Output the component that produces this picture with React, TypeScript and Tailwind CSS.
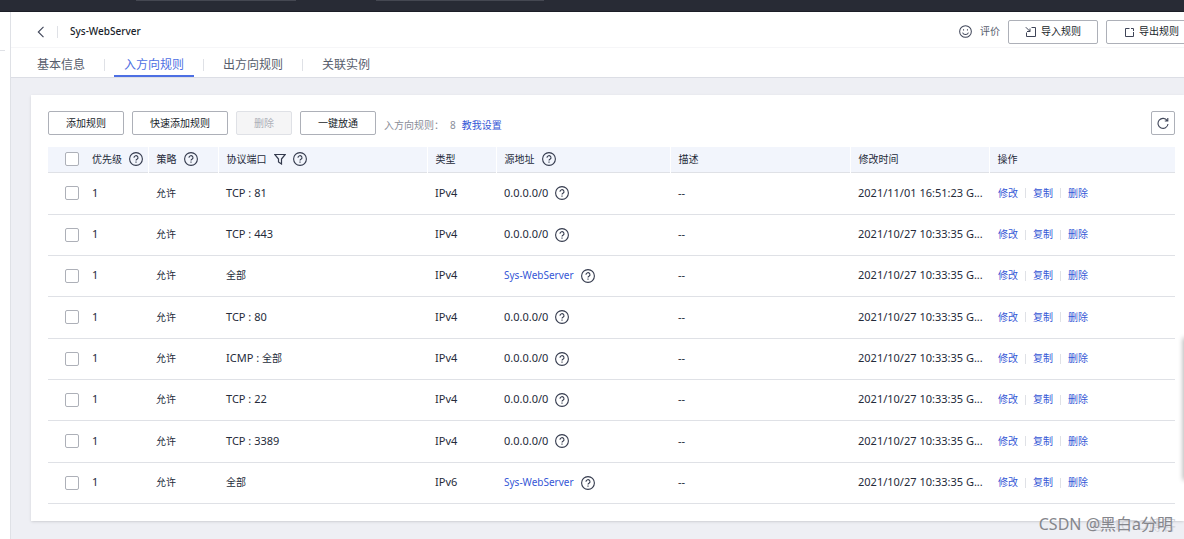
import React from "react";

const font = "font-['Noto_Sans','Noto_Sans_CJK_SC',sans-serif]";

function Help({ label = "帮助" }: { label?: string }) {
  return (
    <button type="button" aria-label={label} className="inline-flex shrink-0">
      <svg viewBox="0 0 14 14" className="size-[14px]" fill="none" stroke="#343a4d" strokeWidth="1.1">
        <circle cx="7" cy="7" r="6.4" />
        <path d="M5 5.700a2 1.900 0 1 1 3 1.500c-.7.4-1 .7-1 1.400M7 9.600v1.200" />
      </svg>
    </button>
  );
}

function Tick({ label }: { label: string }) {
  return (
    <input
      type="checkbox"
      aria-label={label}
      className="block size-[14px] appearance-none rounded-xs border border-[#adb0b8] bg-white"
    />
  );
}

type Rule = { proto?: string; all?: boolean; type: string; source?: string; time: string };

const old = "2021/10/27 10:33:35 G...";
const rules: Rule[] = [
  { proto: "TCP : 81", type: "IPv4", time: "2021/11/01 16:51:23 G..." },
  { proto: "TCP : 443", type: "IPv4", time: old },
  { all: true, type: "IPv4", source: "Sys-WebServer", time: old },
  { proto: "TCP : 80", type: "IPv4", time: old },
  { proto: "ICMP : ", all: true, type: "IPv4", time: old },
  { proto: "TCP : 22", type: "IPv4", time: old },
  { proto: "TCP : 3389", type: "IPv4", time: old },
  { all: true, type: "IPv6", source: "Sys-WebServer", time: old },
];

const tabs = ["基本信息", "入方向规则", "出方向规则", "关联实例"];
const heads = ["优先级", "策略", "协议端口", "类型", "源地址", "描述", "修改时间", "操作"];
const withHelp = ["优先级", "策略", "协议端口", "源地址"];

function HeaderButton({ children, icon }: { children: string; icon: React.ReactNode }) {
  return (
    <button
      type="button"
      className="flex h-6 w-[90px] shrink-0 items-center justify-center gap-1 rounded-xs border border-[#adb0b8] bg-white text-[10px] text-[#191e2b]"
    >
      {icon}
      {children}
    </button>
  );
}

function ToolButton({ children, disabled = false }: { children: string; disabled?: boolean }) {
  return (
    <button
      type="button"
      disabled={disabled}
      className="h-6 rounded-xs border border-[#adb0b8] bg-white px-[17px] text-[10px] text-[#191e2b] disabled:border-[#dfe1e6] disabled:bg-[#f5f5f6] disabled:text-[#adb0b8]"
    >
      {children}
    </button>
  );
}

export default function App() {
  return (
    <div className={`relative flex min-h-screen flex-col overflow-hidden bg-white text-[#252b3a] ${font}`}>
      <div className="h-3 border-b border-[#1c1e27] bg-[#282b35]">
        <div className="ml-[136px] flex gap-20">
          <div className="h-px w-40 bg-[#454852]" />
          <div className="h-px w-[168px] bg-[#454852]" />
        </div>
      </div>
      <div className="flex flex-1">
        <aside className="w-[11px] shrink-0 border-r border-[#dfe1e6] pt-[38px]">
          <div className="h-px w-[5px] bg-[#dfe1e6]" />
        </aside>
        <main className="flex min-w-0 flex-1 flex-col bg-[#eeeff4]">
          <header className="border-b border-[#dcdee5] bg-white">
            <div className="flex h-9 items-center overflow-hidden border-b border-[#f6f6f8] pl-6 pt-1">
              <button type="button" aria-label="返回" className="flex">
                <svg viewBox="0 0 12 12" className="size-3" fill="none" stroke="#3f4558" strokeWidth="1.1">
                  <path d="M8.500.800 3.300 6l5.200 5.200" />
                </svg>
              </button>
              <div className="ml-[10px] h-3 w-px bg-[#dfe1e6]" />
              <h1 className="ml-3 text-[10px] font-medium text-[#191e2b]">Sys-WebServer</h1>
              <button type="button" className="ml-auto flex items-center gap-2 text-[10px] text-[#575d6c]">
                <svg viewBox="0 0 14 14" className="size-[13px]" fill="none" stroke="#3f4558" strokeWidth="1.100">
                  <circle cx="7" cy="7" r="6.300" />
                  <path d="M3.800 8.200c.6 1.400 1.800 2.100 3.200 2.100s2.600-.7 3.200-2.100M4.900 4.500v1.400M9.100 4.500v1.400" />
                </svg>
                评价
              </button>
              <div className="ml-2 -mr-3 flex shrink-0 gap-2">
                <HeaderButton
                  icon={
                    <svg viewBox="0 0 12 12" className="size-3" fill="none" stroke="#3f4558" strokeWidth="1">
                      <path d="M6.500 1.500h4v9h-9V6.500M.8 1.200l4.200 4.200M5 2.500v3H2" />
                    </svg>
                  }
                >
                  导入规则
                </HeaderButton>
                <HeaderButton
                  icon={
                    <svg viewBox="0 0 12 12" className="size-3" fill="none" stroke="#3f4558" strokeWidth="1">
                      <path d="M6.500 2.500h-4v8h8V6M8 2.500h2.500V5" />
                    </svg>
                  }
                >
                  导出规则
                </HeaderButton>
              </div>
            </div>
            <nav className="flex h-[29px] items-stretch pl-4">
              {tabs.map((t, i) => (
                <React.Fragment key={t}>
                  {i > 0 && <div className="mx-[9px] mt-[11px] h-3 w-px shrink-0 bg-[#dfe1e6]" />}
                  <a
                    href="#"
                    className={
                      i === 1
                        ? "flex items-center border-b-2 border-[#4d6fe3] px-[10px] pt-[6px] text-[12px] text-[#4d6fe3]"
                        : "flex items-center border-b-2 border-transparent px-[10px] pt-[6px] text-[12px] text-[#575d6c]"
                    }
                  >
                    {t}
                  </a>
                </React.Fragment>
              ))}
            </nav>
          </header>

          <section className="mb-[18px] ml-5 mt-[17px] flex-1 bg-white pb-4 pl-[17px] pr-[9px] pt-4 shadow-sm">
            <div className="flex items-center gap-2">
              <ToolButton>添加规则</ToolButton>
              <ToolButton>快速添加规则</ToolButton>
              <ToolButton disabled>删除</ToolButton>
              <ToolButton>一键放通</ToolButton>
              <p className="flex gap-[6px] pt-1 text-[10px] text-[#8a8e99]">
                <span>入方向规则：</span>
                <span>8</span>
                <a href="#" className="text-[#3557d6]">教我设置</a>
              </p>
              <button
                type="button"
                aria-label="刷新"
                className="ml-auto flex size-6 items-center justify-center rounded-xs border border-[#adb0b8]"
              >
                <svg viewBox="0 0 12 12" className="size-3" fill="none" stroke="#3f4558" strokeWidth="1.1">
                  <path d="M10.200 3.600A5 5 0 1 0 11 7M10.800 1v3H7.800" />
                </svg>
              </button>
            </div>

            <table className="mt-3 w-full table-fixed border-collapse text-left">
              <colgroup>
                <col className="w-9" />
                <col className="w-16" />
                <col className="w-[70px]" />
                <col className="w-[209px]" />
                <col className="w-[69px]" />
                <col className="w-[174px]" />
                <col className="w-[180px]" />
                <col className="w-[139px]" />
                <col />
              </colgroup>
              <thead>
                <tr className="h-[25px] border-b border-[#dfe1e6] bg-[#f2f5fc] text-[10px]">
                  <th className="p-0 pl-[17px]">
                    <Tick label="全选" />
                  </th>
                  {heads.map((h, i) => (
                    <th
                      key={h}
                      className={
                        i === 0
                          ? "p-0 pl-2 font-normal whitespace-nowrap"
                          : "border-l border-white p-0 pl-2 font-normal whitespace-nowrap"
                      }
                    >
                      <div className="flex items-center gap-[7px]">
                        {h}
                        {h === "协议端口" && (
                          <button type="button" aria-label="筛选" className="flex">
                            <svg viewBox="0 0 12 12" className="size-3" fill="none" stroke="#343a4d" strokeWidth="1.2">
                              <path d="M.8 1.500h10.400L7.500 6v5L4.500 9V6z" />
                            </svg>
                          </button>
                        )}
                        {withHelp.includes(h) && <Help />}
                      </div>
                    </th>
                  ))}
                </tr>
              </thead>
              <tbody>
                {rules.map((r, i) => (
                  <tr
                    key={i}
                    className="h-[41px] border-b border-[#dfe1e6] text-[11px] whitespace-nowrap nth-[3n+1]:h-[42px]"
                  >
                    <td className="p-0 pl-[17px]">
                      <Tick label={`选择规则 ${i + 1}`} />
                    </td>
                    <td className="p-0 pl-2">1</td>
                    <td className="p-0 pl-2 text-[10px]">允许</td>
                    <td className="p-0 pl-2 whitespace-pre">
                      {r.proto}
                      {r.all && <span className="text-[10px]">全部</span>}
                    </td>
                    <td className="p-0 pl-2">{r.type}</td>
                    <td className="p-0 pl-2">
                      <div className="flex items-center gap-[7px]">
                        {r.source ? (
                          <a href="#" className="text-[10px] text-[#3557d6]">{r.source}</a>
                        ) : (
                          "0.0.0.0/0"
                        )}
                        <Help />
                      </div>
                    </td>
                    <td className="p-0 pl-2">--</td>
                    <td className="p-0 pl-2">{r.time}</td>
                    <td className="p-0 pl-[9px]">
                      <div className="flex items-center gap-[7px] text-[10px] text-[#3557d6]">
                        <a href="#">修改</a>
                        <span className="h-[10px] w-px bg-[#dfe1e6]" />
                        <a href="#">复制</a>
                        <span className="h-[10px] w-px bg-[#dfe1e6]" />
                        <a href="#">删除</a>
                      </div>
                    </td>
                  </tr>
                ))}
              </tbody>
            </table>
          </section>
        </main>
      </div>
      <div className="absolute -right-1 bottom-[60px] h-[140px] w-1 shadow-[0_0_5px_1px_rgba(0,0,0,0.3)]" />
      <div className="absolute bottom-1 right-2 text-[14px] text-[#d3d4da]">@51CTO博客</div>
      <div className="absolute bottom-[3px] right-[11px] text-[16px] text-[#85868c]">CSDN @黑白a分明</div>
    </div>
  );
}
